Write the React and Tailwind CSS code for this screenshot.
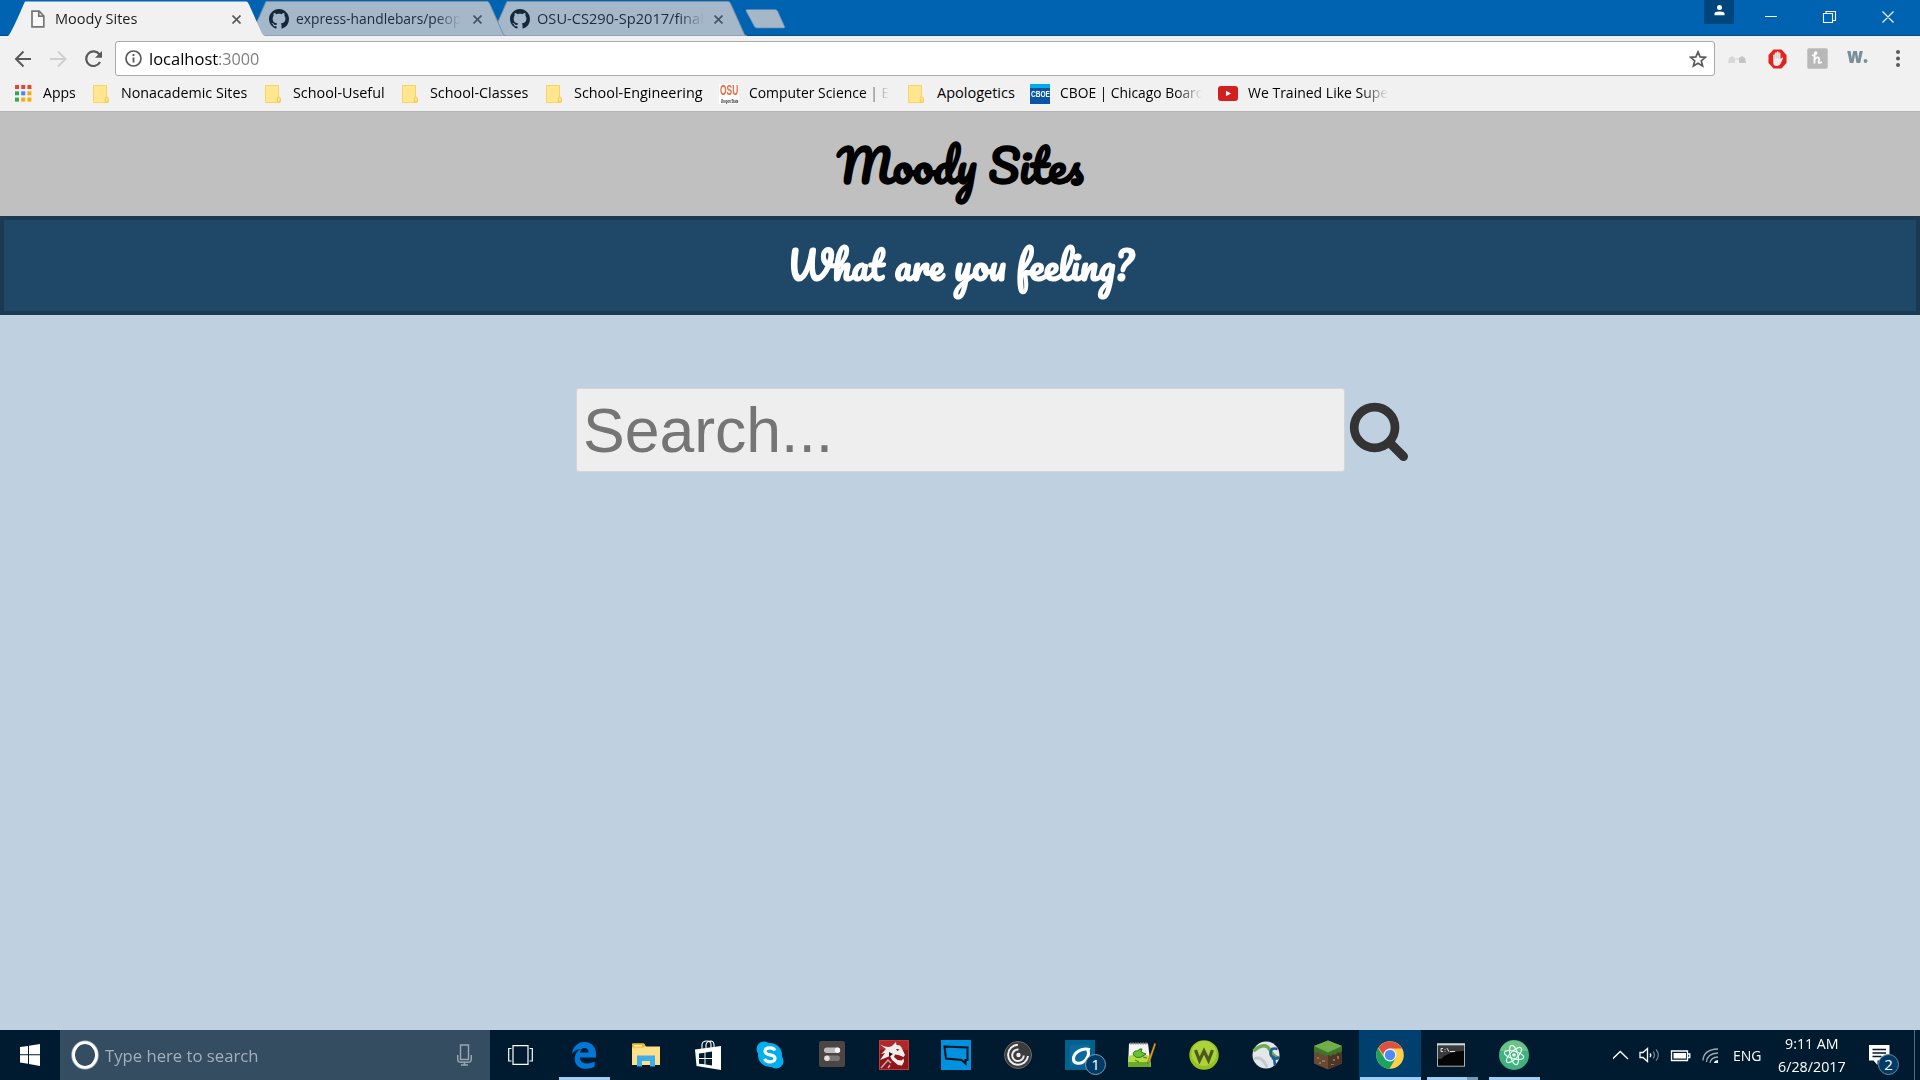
import React, { useLayoutEffect, useRef, useState } from "react";

// Text that is condensed or widened to fill exactly `w` pixels.
function Fit({ w, className = "", children }) {
  const ref = useRef(null);
  const [scale, setScale] = useState(1);
  useLayoutEffect(() => {
    if (ref.current) setScale(w / ref.current.offsetWidth);
  }, [w, children]);
  return (
    <span className={"inline-flex shrink-0 whitespace-pre " + className} style={{ width: w }}>
      <span ref={ref} className="inline-block shrink-0 origin-left" style={{ transform: `scaleX(${scale})` }}>
        {children}
      </span>
    </span>
  );
}

const FADE = "[mask-image:linear-gradient(to_right,black_calc(100%-26px),transparent)]";

const GitHub = () => (
  <svg width="20" height="20" viewBox="0 0 16 16" fill="#13283b" className="shrink-0">
    <path d="M8 0C3.58 0 0 3.58 0 8c0 3.54 2.29 6.53 5.47 7.59.4.07.55-.17.55-.38 0-.19-.01-.82-.01-1.49-2.01.37-2.53-.49-2.69-.94-.09-.23-.48-.94-.82-1.13-.28-.15-.68-.52-.01-.53.63-.01 1.08.58 1.23.82.72 1.21 1.87.87 2.33.66.07-.52.28-.87.51-1.07-1.78-.2-3.64-.89-3.64-3.95 0-.87.31-1.59.82-2.15-.08-.2-.36-1.02.08-2.12 0 0 .67-.21 2.2.82.64-.18 1.32-.27 2-.27s1.36.09 2 .27c1.53-1.04 2.2-.82 2.2-.82.44 1.1.16 1.92.08 2.12.51.56.82 1.27.82 2.15 0 3.07-1.87 3.75-3.65 3.95.29.25.54.73.54 1.48 0 1.07-.01 1.93-.01 2.2 0 .21.15.46.55.38A8.01 8.01 0 0 0 16 8c0-4.42-3.58-8-8-8z" />
  </svg>
);

const FileIcon = () => (
  <svg width="20" height="20" viewBox="0 0 20 20" fill="none" stroke="#757575" strokeWidth="1.7" className="shrink-0">
    <path d="M4 2.2h7.2l4.6 4.8v10.8H4z" fill="#f8f8f8" />
    <path d="M10.8 2.2v5h5" />
  </svg>
);

function Tab({ active, icon, title, w, className }) {
  return (
    <div className={"relative flex h-[35px] w-[256px] shrink-0 items-center " + className}>
      <svg width="258" height="35" viewBox="0 0 258 35" className="absolute left-0 top-0">
        <path
          d="M0 35C3 34 17 0 17 0.5H238C239.5 0.5 240 1.5 241 3.5L254 32.5C254.5 33.8 255.5 34.5 257 35Z"
          fill={active ? "#f1f1f1" : "#a4b8ca"}
          stroke={active ? "none" : "#7890a6"}
        />
      </svg>
      <div className="relative flex w-full items-center pl-5 pt-px">
        {icon}
        <Fit w={w} className={"ml-[7px] -mt-[2px] text-[14px] " + (active ? "text-[#1c1c1c]" : "text-[#1a2b3b] " + FADE)}>
          {title}
        </Fit>
        <svg width="9" height="9" viewBox="0 0 9 9" className="absolute left-[224px]" stroke={active ? "#5a5a5a" : "#42566a"} strokeWidth="1.7">
          <path d="M.5 .5l8 8M8.5 .5l-8 8" />
        </svg>
      </div>
    </div>
  );
}

const Folder = () => (
  <svg width="16" height="18" viewBox="0 0 16 18">
    <path d="M.5 .5h13v11.500l1.200 1.500v4H.5z" fill="#ffe68f" stroke="#f7d366" />
    <path d="M12.300 17v-3.400q0-1.600 1.300-1.600 1.700 0 1.700 1.600V17z" fill="#ffe68f" stroke="#f2c84c" />
  </svg>
);

const APP_COLORS = ["#ea4335", "#ea4335", "#ea4335", "#34a853", "#4285f4", "#fbaa05", "#34a853", "#fbaa05", "#fbaa05"];
const AppsGrid = () => (
  <svg width="17" height="17" viewBox="0 0 17 17">
    {APP_COLORS.map((c, i) => (
      <rect key={i} x={(i % 3) * 6.2} y={Math.floor(i / 3) * 6.3} width="4" height="4" fill={c} />
    ))}
  </svg>
);

const Osu = () => (
  <span className="flex h-5 w-5 flex-col items-center bg-white">
    <Fit w={18} className="h-[14px] font-['Liberation_Sans'] text-[14px] font-bold leading-[12px] text-[#f0643a]">OSU</Fit>
    <Fit w={17} className="h-[6px] font-['Liberation_Sans'] text-[5px] font-bold leading-[6px] text-[#222]">Oregon State</Fit>
  </span>
);

const Cboe = () => (
  <span className="flex h-5 w-5 flex-col bg-[#0b55a5]">
    <span className="h-1 bg-[#00aeef]" />
    <Fit w={19} className="ml-[0.5px] font-['Liberation_Sans'] text-[9px] font-bold leading-[13px] text-white">CBOE</Fit>
  </span>
);

const YouTube = () => (
  <svg width="20" height="15" viewBox="0 0 20 15">
    <rect width="20" height="15" rx="3" fill="#d2201f" />
    <path d="M8 4.8l5 2.7-5 2.8z" fill="#fff" />
  </svg>
);

const BOOKMARKS = [
  { icon: <AppsGrid />, gap: 28, text: "Apps", w: 33, total: 78 },
  { icon: <Folder />, gap: 28, text: "Nonacademic Sites", w: 126, total: 172 },
  { icon: <Folder />, gap: 28, text: "School-Useful", w: 92, total: 137 },
  { icon: <Folder />, gap: 28, text: "School-Classes", w: 98, total: 144 },
  { icon: <Folder />, gap: 28, text: "School-Engineering", w: 129, total: 173 },
  { icon: <Osu />, gap: 30, text: "Computer Science | E", w: 140, total: 189, fade: true },
  { icon: <Folder />, gap: 29, text: "Apologetics", w: 78, total: 122 },
  { icon: <Cboe />, gap: 30, text: "CBOE | Chicago Boarc", w: 142, total: 188, fade: true },
  { icon: <YouTube />, gap: 30, text: "We Trained Like Supe", w: 140, total: 180, fade: true },
];

function Browser() {
  return (
    <div className="h-28 shrink-0 bg-[#f1f1f1]">
      <div className="flex h-9 border-b border-[#034c86] bg-[#0063b1] pl-2 pt-px">
        <Tab active icon={<FileIcon />} title="Moody Sites" w={82} className="z-30" />
        <Tab icon={<GitHub />} title="express-handlebars/peop" w={165} className="z-20 -ml-[15px]" />
        <Tab icon={<GitHub />} title="OSU-CS290-Sp2017/final" w={167} className="z-10 -ml-[15px]" />
        <svg width="42" height="20" viewBox="0 0 42 20" className="mt-2 -ml-px">
          <path d="M2 .5h28q1.8 0 2.6 1.6l7 15.4q.7 1.500-1 1.500H12q-1.800 0-2.600-1.600L1 2Q.5.5 2 .5z" fill="#a4b8ca" stroke="#5f86aa" strokeWidth=".7" />
        </svg>
        <div className="-mt-px ml-auto flex items-start">
          <div className="flex h-6 w-[30px] justify-center bg-[#00457b] pt-[5px]">
            <svg width="11" height="11" viewBox="0 0 11 11" fill="#fff">
              <circle cx="5.500" cy="2.500" r="2.500" />
              <path d="M.5 10.200V8.500Q.5 6.500 5.500 6.500T10.500 8.500V10.200z" />
            </svg>
          </div>
          <svg width="186" height="34" viewBox="0 0 186 34" fill="none" stroke="#fff" strokeWidth="1.100">
            <path d="M31 16.500h12M89.500 13.500h9v9h-9zM92 13v-1.500h9.500v9H99M148.500 11.500l11 11M159.500 11.500l-11 11" />
          </svg>
        </div>
      </div>
      <div className="flex h-[40px] items-center pt-[5px]">
        <svg width="107" height="24" viewBox="0 0 107 24" fill="none" stroke="#5a5a5a" strokeWidth="2" className="mr-2 shrink-0">
          <path d="M31 12H16.500M23.500 4.500L16 12l7.500 7.500" />
          <path d="M50 12h15M58 4.500l7.500 7.500-7.500 7.500" stroke="#cfcfcf" />
          <path d="M99.500 7.500A7.300 7.300 0 1 0 100 15" strokeWidth="2.200" />
          <path d="M102 4v6.800h-7z" fill="#5a5a5a" stroke="none" />
        </svg>
        <div className="flex h-[35px] w-[1600px] shrink-0 items-center rounded-[3px] border border-[#a9a9a9] bg-white pl-[9px]">
          <svg width="17" height="17" viewBox="0 0 17 17" fill="none" stroke="#5a5a5a" strokeWidth="1.700">
            <circle cx="8.500" cy="8.500" r="7.500" />
            <path d="M8.500 7.400v5M8.500 4v1.900" strokeWidth="1.800" />
          </svg>
          <Fit w={69} className="ml-[7px] text-[17px] text-black">localhost</Fit>
          <Fit w={41} className="text-[17px] text-[#808080]">:3000</Fit>
          <svg width="18" height="18" viewBox="0 0 18 18" fill="none" stroke="#5a5a5a" strokeWidth="1.700" className="ml-auto mr-[7px]">
            <path d="M9 1.900l2.100 5 5.300.4-4.100 3.500 1.300 5.200L9 13.200 4.400 16l1.300-5.200L1.600 7.300l5.300-.4z" />
          </svg>
        </div>
        <svg width="18" height="10" viewBox="0 0 18 10" className="ml-[13px]">
          <path d="M1 4l3-2 3 2v5H0z" fill="#d8d8d8" />
          <path d="M11 4l3-2 3 2 1 5h-7z" fill="#c4c4c4" />
          <path d="M7 4h4v2H7z" fill="#e2e2e2" />
        </svg>
        <svg width="19" height="20" viewBox="0 0 19 20" className="ml-[22px]">
          <path d="M5.500.5h8l5 5.500v8l-5 5.500h-8l-5-5.500V6z" fill="#e2231d" />
          <path d="M5.200 11V6q1-1.400 1.700 0V4q1-1.500 1.900-.1V3q1-1.300 1.900.1v1q1-1.200 1.800.2v6l1.300-1.500q1.400-.6 1.200.8l-2.600 5.300q-1.200 2-3.600 2-3.600-.1-3.600-3z" fill="#f3eeee" />
          <path d="M6.900 6v4M8.800 4v5.500M10.700 4v5.500" stroke="#b9aaaa" strokeWidth=".6" />
        </svg>
        <svg width="21" height="21" viewBox="0 0 21 21" className="ml-[20px]">
          <rect x=".5" y=".5" width="20" height="20" rx="1.500" fill="#b8b8b8" stroke="#c8c8c8" />
          <path d="M5 7.500Q10 7 9.500 4.700 8.500 3 7.500 6V15.500M7.500 12Q9 8.500 11.500 9.500 13 11 11.500 14q0 2 3.500 0" fill="none" stroke="#fff" strokeWidth="1.700" />
        </svg>
        <Fit w={21} className="ml-[19px] -mt-[7px] font-['Open_Sans'] text-[21px] font-extrabold leading-5 text-[#788f9a]">w.</Fit>
        <svg width="4" height="17" viewBox="0 0 4 17" fill="#5a5a5a" className="ml-[28px]">
          <circle cx="2" cy="2" r="2" /><circle cx="2" cy="8.500" r="2" /><circle cx="2" cy="15" r="2" />
        </svg>
      </div>
      <div className="flex h-[36px] items-center border-b border-[#b5b5b5] pl-[15px]">
        {BOOKMARKS.map((b) => (
          <div key={b.text} className="flex shrink-0 items-center" style={{ width: b.total }}>
            <span className="shrink-0" style={{ width: b.gap }}>{b.icon}</span>
            <Fit w={b.w} className={"-mt-px text-[14.500px] text-black " + (b.fade ? FADE : "")}>{b.text}</Fit>
          </div>
        ))}
      </div>
    </div>
  );
}

function Page() {
  return (
    <main className="flex-1 bg-[#bfd0e0]">
      <header className="flex h-[104px] justify-center bg-[#c0c0c0] pt-[15px]">
        <h1>
          <Fit w={246} className="font-[Pacifico,cursive] text-[45px] font-bold leading-[76px] text-black">Moody Sites</Fit>
        </h1>
      </header>
      <section className="flex h-[99px] justify-center border-4 border-[#1b3a52] bg-[#1f4868] pt-[13px]">
        <h2>
          <Fit w={346} className="font-[Pacifico,cursive] text-[37.500px] font-bold leading-[64px] text-white">What are you feeling?</Fit>
        </h2>
      </section>
      <section className="flex items-center pl-[576px] pt-[73px]">
        <input
          className="h-[84px] w-[769px] rounded-[3px] border border-[#d5d5d5] bg-[#eee] pl-[6px] pt-px font-['Liberation_Sans'] text-[62.500px] text-[#333] outline-none placeholder:text-[#757575] placeholder:opacity-100"
          placeholder="Search..."
        />
        <svg width="60" height="60" viewBox="0 0 60 60" fill="none" stroke="#333" className="ml-[4px] mt-[3px]">
          <circle cx="25.600" cy="25.500" r="20.400" strokeWidth="8.700" />
          <path d="M41 41l13.500 13.500" strokeWidth="9" strokeLinecap="round" />
        </svg>
      </section>
    </main>
  );
}

const Edge = () => (
  <svg width="26" height="28" viewBox="0 0 26 28">
    <path d="M1 12.500C2.200 5 7.300 1 13.500 1 20.800 1 25 6 25 13v3.500H8.700c.4 4.500 3.800 6 7.600 6 2.900 0 5.200-.8 7.300-2v5.300c-2.300 1.300-5.200 2-8.600 2C8 27.800 3.700 23.800 3.700 17.700c0-4.300 2-7.800 6-9.700C5.500 8.500 3 10.300 1 12.500zM9 11.500h8.600c0-3-1.500-4.500-4-4.500-2.600 0-4.100 1.800-4.600 4.500z" fill="#0078d7" />
  </svg>
);
const Explorer = () => (
  <svg width="28" height="24" viewBox="0 0 28 24">
    <path d="M0 1.500Q0 .5 1 .5h11l2 3h14V22H0z" fill="#ffe08a" />
    <path d="M0 1.500Q0 .5 1 .5h11l1 2-1 2H0z" fill="#f0b429" />
    <path d="M2 2h8v1.500H2z" fill="#fff3c0" />
    <path d="M5 23.500V12.500h18v11h-5V18h-8v5.500z" fill="#3daee9" />
  </svg>
);
const Store = () => (
  <svg width="27" height="30" viewBox="0 0 27 30">
    <path d="M7 9V5q0-3.500 4-4 4.500-.5 5 3V9M11 8V4.500Q12 1 16 1q3 .5 3 4V9" fill="none" stroke="#fff" strokeWidth="1.100" />
    <path d="M0 9.500L26 6v24L1.500 26z" fill="#fff" />
    <path d="M4 13.500l5.500-.8v5.300H4zM10.500 12.500l6.500-1V18h-6.500zM4 19h5.500v5.300L4 23.800zM10.500 19H17v6.500l-6.500-1z" fill="#001b2f" />
  </svg>
);
const Skype = () => (
  <svg width="28" height="28" viewBox="0 0 28 28">
    <circle cx="14" cy="14" r="12" fill="#00aff0" />
    <circle cx="8" cy="8" r="7.500" fill="#00aff0" /><circle cx="20" cy="20" r="7.500" fill="#00aff0" />
    <path d="M19 9.500Q17.500 6.800 13.800 6.900 9 7 9 10.300q0 2.700 5 3.600 5 .9 5 3.600-.2 3.300-5 3.400-4 0-5.500-3" fill="none" stroke="#fff" strokeWidth="3.200" />
  </svg>
);
const Toggles = () => (
  <svg width="26" height="26" viewBox="0 0 26 26" className="-mt-[2px]">
    <rect width="26" height="26" rx="2.500" fill="#4b4644" />
    <rect x="5" y="6.500" width="16" height="5.500" rx="2.700" fill="#bdbdbd" /><circle cx="18.500" cy="9.200" r="2.700" fill="#f5f5f5" />
    <rect x="5" y="14.500" width="16" height="5.500" rx="2.700" fill="#7a7676" /><circle cx="8" cy="17.200" r="2.700" fill="#e4e4e4" />
  </svg>
);
const Dragon = () => (
  <svg width="30" height="30" viewBox="0 0 30 30">
    <rect x=".5" y=".5" width="29" height="29" fill="#8f1518" stroke="#c13a37" />
    <path d="M1 1h28v9H1z" fill="#b3262a" />
    <path d="M1 4.500q7 4 12 1.500l4-4 .5 3 3.500.5 1.500 2L26 15l-1.500 2-5-2-3.500-.5-1 2.500 3.500 3 4 .5 2-2 .5 3-2 4-4-.5-6-5-2-4-2.500 1L1 20l5-7-4 1 5-5z" fill="#f0eded" />
    <path d="M2 28l7-8 3 3M9 28l2-3" fill="none" stroke="#c9a9a9" strokeWidth="1.500" />
    <path d="M17 9l3.500.500-2 1.500zM10 12l4 2-4 3zM12 6l3 3" fill="#3a0c0d" />
  </svg>
);
const Chat = () => (
  <svg width="30" height="30" viewBox="0 0 30 30">
    <rect width="30" height="30" fill="#0091df" />
    <path d="M3.500 6.500l23 1V20h-2v3.500L20.500 20 5 18.500z" fill="none" stroke="#06131d" strokeWidth="2" />
  </svg>
);
const Citrix = () => (
  <svg width="28" height="28" viewBox="0 0 28 28">
    <circle cx="14" cy="14" r="13.500" fill="#3c3c3f" stroke="#6a6a6c" />
    <path d="M14 3.800A10 10 0 1 0 24 15M14.500 8.500A5.800 5.800 0 1 0 19.800 14.500" fill="none" stroke="#eee" strokeWidth="2" />
    <circle cx="14.500" cy="14" r="2.200" fill="#eee" />
  </svg>
);
const SwirlApp = () => (
  <span className="relative flex h-[30px] w-[30px] bg-[#006291]">
    <svg width="30" height="30" viewBox="0 0 30 30">
      <path d="M5 5h20v20H5z" fill="#0a6a9b" />
      <path d="M25 9.700C17 7.500 9 12 8.500 18.500c-.3 5 5.500 6 9.500 3.500 4.500-3 7-8.500 4.500-12" fill="none" stroke="#fff" strokeWidth="3" />
    </svg>
    <span className="absolute left-5 top-[14px] flex h-[21px] w-[21px] items-center justify-center rounded-full border border-[#7f9db5] bg-[#003a66] text-[15px] text-white">1</span>
  </span>
);
const NotepadPlus = () => (
  <svg width="28" height="28" viewBox="0 0 28 28">
    <path d="M1 2.500h19l3 23.500H0z" fill="#f4f6f0" /><path d="M.7 15Q12 11 21.600 15L23 26H0z" fill="#b5dd45" /><path d="M.3 21h22l.5 5H0z" fill="#6cab25" />
    <path d="M2 2.500h18" stroke="#888" strokeWidth="2" strokeDasharray="1.500 1" />
    <path d="M5 13q1-4 5-3 1-3 4-2l-1 3 5 2-5 3q-5 2-8-3zM7 19l4 2M15 16l4 1" fill="#62c431" stroke="#2c5714" strokeWidth=".8" />
    <path d="M20 20L26.500 2l1.500.7L22 20.500l-2.500 2z" fill="#f5a623" stroke="#6b4a17" strokeWidth=".5" />
  </svg>
);
const Webroot = () => (
  <svg width="30" height="30" viewBox="0 0 30 30">
    <circle cx="15" cy="15" r="14.700" fill="#95c11f" /><circle cx="15" cy="13.500" r="12.500" fill="#add33c" />
    <path d="M6.500 10l4 10.500L15 11l4.500 9.500L23.500 10" fill="none" stroke="#4c5a1d" strokeWidth="3.200" />
  </svg>
);
const AnyConnect = () => (
  <svg width="28" height="28" viewBox="0 0 28 28">
    <circle cx="14" cy="14" r="13.500" fill="#e3e7e9" />
    <path d="M1.500 10Q13 0 18 9q3 6 8 8" fill="none" stroke="#6faa50" strokeWidth="3.500" />
    <path d="M25.500 8q-7-2-7 4 0 3.500 3.500 4.500l1 8M20 17q4 2 7-1" fill="none" stroke="#1e5d94" strokeWidth="2.600" />
    <path d="M2 18q8-4 13 8.500" fill="none" stroke="#c3cbd0" strokeWidth="3" />
  </svg>
);
const Minecraft = () => (
  <svg width="30" height="30" viewBox="0 0 30 30">
    <path d="M15 .5L29 6v17.500L15 29.500 1 23.500V6z" fill="#6b4a35" />
    <path d="M15 13v16.500l14-6V6z" fill="#4f3526" />
    <path d="M15 .5L29 6v5l-2 2-2-1-3 3-2-1-2 2-3-1-3 1-2-2-2 1-3-3-2 1-2-2V6z" fill="#3f7528" />
    <path d="M15 .5L29 6 15 12.500 1 6z" fill="#6fae4b" />
    <path d="M4 17h2v2H4zM9 20h3v2H9zM6 22h2v2H6zM20 19h2v2h-2zM24 16h2v3h-2zM18 24h3v1h-3z" fill="#93705a" />
  </svg>
);
const Chrome = () => (
  <svg width="28" height="28" viewBox="0 0 28 28">
    <circle cx="14" cy="14" r="13.800" fill="#fdd048" />
    <path d="M2 7.100A13.800 13.800 0 0 0 13.500 27.800L19.500 17.500 8.500 17.200z" fill="#1da261" />
    <path d="M2.500 6.500A13.800 13.800 0 0 1 26 7.500H14Q9 8 7.500 14z" fill="#dd5144" />
    <circle cx="14" cy="14" r="6.500" fill="#f1f1f1" /><circle cx="14" cy="14" r="5.200" fill="#4c8bf5" />
  </svg>
);
const Cmd = () => (
  <svg width="28" height="24" viewBox="0 0 28 24" className="-ml-[2px] -mt-px">
    <rect x=".5" y=".8" width="27" height="22.400" fill="#050505" stroke="#a9b0b5" />
    <path d="M0 .5h28v2H0z" fill="#cfd5d9" />
    <path d="M1 3h26v5Q12 8 4 16H1z" fill="#3a3a3a" />
    <path d="M6 5.500H4v3h2M8 6v.8M8 8v.6M10 5.200l2 3.500M13 8.500h5" fill="none" stroke="#ddd" />
  </svg>
);
const Atom = () => (
  <svg width="30" height="30" viewBox="0 0 30 30">
    <circle cx="15" cy="15" r="15" fill="#3fb27f" /><path d="M.7 11A15 15 0 0 1 29.300 11z" fill="#6cc188" />
    <g fill="none" stroke="#e6fff2" strokeWidth="1.200">
      <ellipse cx="15" cy="15" rx="10" ry="3.800" transform="rotate(15 15 15)" />
      <ellipse cx="15" cy="15" rx="10" ry="3.800" transform="rotate(75 15 15)" />
      <ellipse cx="15" cy="15" rx="10" ry="3.800" transform="rotate(135 15 15)" />
    </g>
    <circle cx="15" cy="15" r="1.800" fill="#fff" />
  </svg>
);

const TASKS = [
  { icon: <Edge />, bar: "w-[51px]" },
  { icon: <Explorer /> },
  { icon: <Store /> },
  { icon: <Skype /> },
  { icon: <Toggles /> },
  { icon: <Dragon /> },
  { icon: <Chat /> },
  { icon: <Citrix /> },
  { icon: <SwirlApp /> },
  { icon: <NotepadPlus /> },
  { icon: <Webroot /> },
  { icon: <AnyConnect /> },
  { icon: <Minecraft /> },
  { icon: <Chrome />, bar: "w-[61px]", active: true },
  { icon: <Cmd />, bar: "w-[51px] border-r-[11px] border-[#7698b4]" },
  { icon: <Atom />, bar: "w-[51px]" },
];

function Taskbar() {
  return (
    <footer className="flex h-[50px] shrink-0 bg-[#001b2f] text-white">
      <div className="flex w-[60px] items-center justify-center">
        <svg width="20" height="22" viewBox="0 0 20 22" fill="#fff">
          <path d="M0 3l8-1.100V10.200H0zM9 1.700L20 0v10.200H9zM0 11.300h8v8.400L0 18.500zM9 11.300h11V22L9 20z" />
        </svg>
      </div>
      <div className="flex w-[430px] items-center bg-[#354d61] pl-[11px]">
        <svg width="28" height="30" viewBox="0 0 28 30" fill="none">
          <ellipse cx="14" cy="15" rx="12" ry="12.800" stroke="#9fb0bd" strokeWidth="3.500" />
          <ellipse cx="14" cy="15" rx="11.500" ry="12.300" stroke="#fff" strokeWidth="2.800" />
        </svg>
        <Fit w={153} className="ml-[6px] mt-px text-[17px] text-[#a2b0bb]">Type here to search</Fit>
        <svg width="15" height="22" viewBox="0 0 15 22" fill="none" stroke="#9aa8b3" strokeWidth="1.400" className="ml-auto mr-[18px]">
          <path d="M3.500 1h8v14.500h-8zM.7 11v4q0 3.300 3.300 3.300h7q3.300 0 3.300-3.300v-4M7.500 18.500V21M4 21h7" />
        </svg>
      </div>
      <div className="flex w-[63px] items-center pl-[18px]">
        <svg width="25" height="20" viewBox="0 0 25 20" fill="none" stroke="#fff" strokeWidth="1.200">
          <path d="M5 .7h15v18.600H5zM3.500 3.500H.7v12.500h2.800M21.500 3.500h2.800v12.500h-2.800" />
        </svg>
      </div>
      {TASKS.map((t, i) => (
        <div key={i} className={"relative flex w-[62px] shrink-0 items-center justify-center " + (t.active ? "bg-[#00406f]" : "")}>
          {t.icon}
          {t.bar && <span className={"absolute bottom-0 h-[3px] bg-[#9fcdf3] " + t.bar} />}
        </div>
      ))}
      <div className="ml-auto flex items-center">
        <svg width="108" height="24" viewBox="0 0 108 24" fill="none" stroke="#fff" strokeWidth="1.300">
          <path d="M-.5 16L7.300 8.500 15 16" />
          <path d="M27 9.500h3l4.500-4v13l-4.500-4h-3zM37 10.500q1.500 1.800 0 3.500" />
          <path d="M40 8.500q3 3.500 0 7M43 6.500q4.500 5.500 0 11" stroke="#6d7f8c" />
          <path d="M58.500 8h16v9.500h-16zM75 11h1.800v3.500H75" />
          <path d="M60.500 10h12.500v5.500H60.500z" fill="#fff" stroke="none" />
          <path d="M90 17.500Q90.500 6.500 105 6M93.500 19Q94 10.500 105 10M97 20Q97.500 14.500 105 14" stroke="#9dabb6" />
          <path d="M101 20q0-2.500 4-3v3z" fill="#fff" stroke="none" />
        </svg>
        <Fit w={29} className="ml-[12px] text-[15px]">ENG</Fit>
        <div className="ml-[16px] flex w-[68px] flex-col items-center leading-[23px]">
          <Fit w={54} className="text-[14.500px]">9:11 AM</Fit>
          <Fit w={68} className="text-[14.500px]">6/28/2017</Fit>
        </div>
        <div className="relative ml-[23px] h-[50px] w-[45px]">
          <svg width="21" height="21" viewBox="0 0 21 21" className="mt-[15px]">
            <path d="M0 0h20.500v15.500H8.500V20l-4-4.500H0z" fill="#fff" />
            <path d="M3.500 4.500h13.500M3.500 8h13.500M3.500 11.500h9" stroke="#001b2f" strokeWidth="1.300" />
          </svg>
          <span className="absolute left-[9px] top-6 flex h-[21px] w-[21px] items-center justify-center rounded-full border border-[#6789a5] bg-[#003a66] text-[15px]">2</span>
        </div>
        <div className="h-[50px] w-[6px] border-l border-[#5a6b79]" />
      </div>
    </footer>
  );
}

export default function App() {
  return (
    <div className="flex h-screen w-full flex-col overflow-hidden font-['Open_Sans','Noto_Sans',sans-serif]">
      <Browser />
      <Page />
      <Taskbar />
    </div>
  );
}
